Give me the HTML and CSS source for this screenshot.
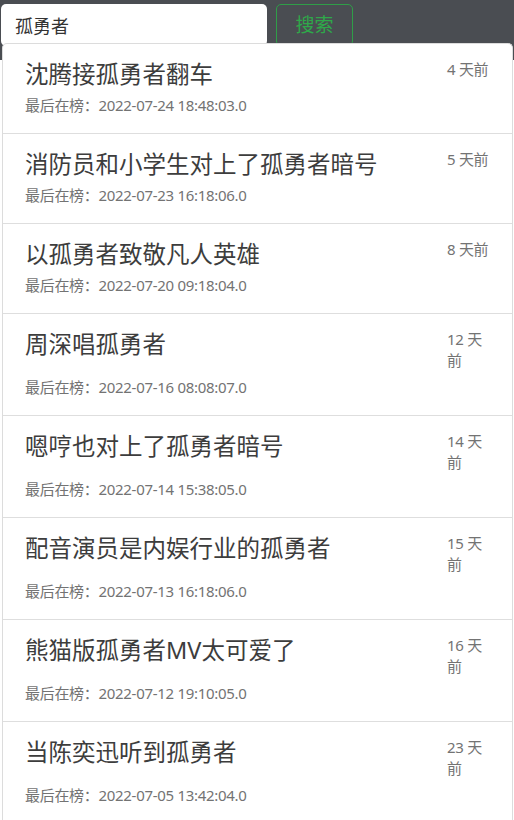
FILE: index.html
```html
<!DOCTYPE html>
<html lang="zh-CN">
<head>
<meta charset="utf-8">
<title>搜索</title>
<link rel="stylesheet" href="styles.css">
</head>
<body>
<header class="bar">
  <form class="search">
    <input class="search-input" type="text" value="孤勇者">
    <button class="search-btn" type="button">搜索</button>
  </form>
</header>
<ul class="suggest">
  <li class="item">
    <div class="row"><span class="title">沈腾接孤勇者翻车</span><span class="ago">4 天前</span></div>
    <div class="meta">最后在榜：2022-07-24 18:48:03.0</div>
  </li>
  <li class="item">
    <div class="row"><span class="title">消防员和小学生对上了孤勇者暗号</span><span class="ago">5 天前</span></div>
    <div class="meta">最后在榜：2022-07-23 16:18:06.0</div>
  </li>
  <li class="item">
    <div class="row"><span class="title">以孤勇者致敬凡人英雄</span><span class="ago">8 天前</span></div>
    <div class="meta">最后在榜：2022-07-20 09:18:04.0</div>
  </li>
  <li class="item">
    <div class="row"><span class="title">周深唱孤勇者</span><span class="ago">12 天前</span></div>
    <div class="meta">最后在榜：2022-07-16 08:08:07.0</div>
  </li>
  <li class="item">
    <div class="row"><span class="title">嗯哼也对上了孤勇者暗号</span><span class="ago">14 天前</span></div>
    <div class="meta">最后在榜：2022-07-14 15:38:05.0</div>
  </li>
  <li class="item">
    <div class="row"><span class="title">配音演员是内娱行业的孤勇者</span><span class="ago">15 天前</span></div>
    <div class="meta">最后在榜：2022-07-13 16:18:06.0</div>
  </li>
  <li class="item">
    <div class="row"><span class="title">熊猫版孤勇者MV太可爱了</span><span class="ago">16 天前</span></div>
    <div class="meta">最后在榜：2022-07-12 19:10:05.0</div>
  </li>
  <li class="item">
    <div class="row"><span class="title">当陈奕迅听到孤勇者</span><span class="ago">23 天前</span></div>
    <div class="meta">最后在榜：2022-07-05 13:42:04.0</div>
  </li>
</ul>
</body>
</html>
```

FILE: styles.css
```css
* {
  box-sizing: border-box;
}

html, body {
  margin: 0;
  padding: 0;
  background: #ffffff;
  font-family: "Noto Sans", "Noto Sans CJK SC", sans-serif;
}

body {
  position: relative;
  height: 820px;
  overflow: hidden;
}

.bar {
  height: 60px;
  background: #4a4d52;
  padding: 4px 0 0 1px;
}

.search {
  display: flex;
  gap: 9px;
  margin: 0;
}

.search-input {
  width: 266px;
  height: 42px;
  border: 0;
  border-radius: 5px;
  background: #ffffff;
  padding: 0 0 0 14px;
  font-family: inherit;
  font-size: 18px;
  color: #333333;
  outline: none;
}

.search-btn {
  width: 77px;
  height: 42px;
  border: 1px solid #2f9e48;
  border-radius: 5px;
  background: transparent;
  color: #2fa84a;
  font-family: inherit;
  font-size: 19px;
  padding: 0;
  line-height: 1;
}

.suggest {
  position: absolute;
  top: 43px;
  left: 2px;
  right: 1px;
  margin: 0;
  padding: 0;
  list-style: none;
  background: #ffffff;
  border: 1px solid #dcdcdc;
  border-bottom: 0;
  border-radius: 5px 5px 0 0;
}

.item {
  padding: 15px 21px 17px 22px;
  border-top: 1px solid #dedede;
}

.item:first-child {
  border-top: 0;
  padding-top: 15px;
}

.row {
  display: flex;
  align-items: flex-start;
}

.title {
  flex: 1;
  font-size: 23.5px;
  line-height: 30px;
  color: #3d3d3d;
}

.ago {
  flex: 0 0 44px;
  width: 44px;
  font-size: 15px;
  letter-spacing: -0.3px;
  line-height: 21px;
  color: #737373;
}

.meta {
  margin-top: 6px;
  font-size: 15px;
  letter-spacing: -0.3px;
  line-height: 21px;
  color: #737373;
}
```
